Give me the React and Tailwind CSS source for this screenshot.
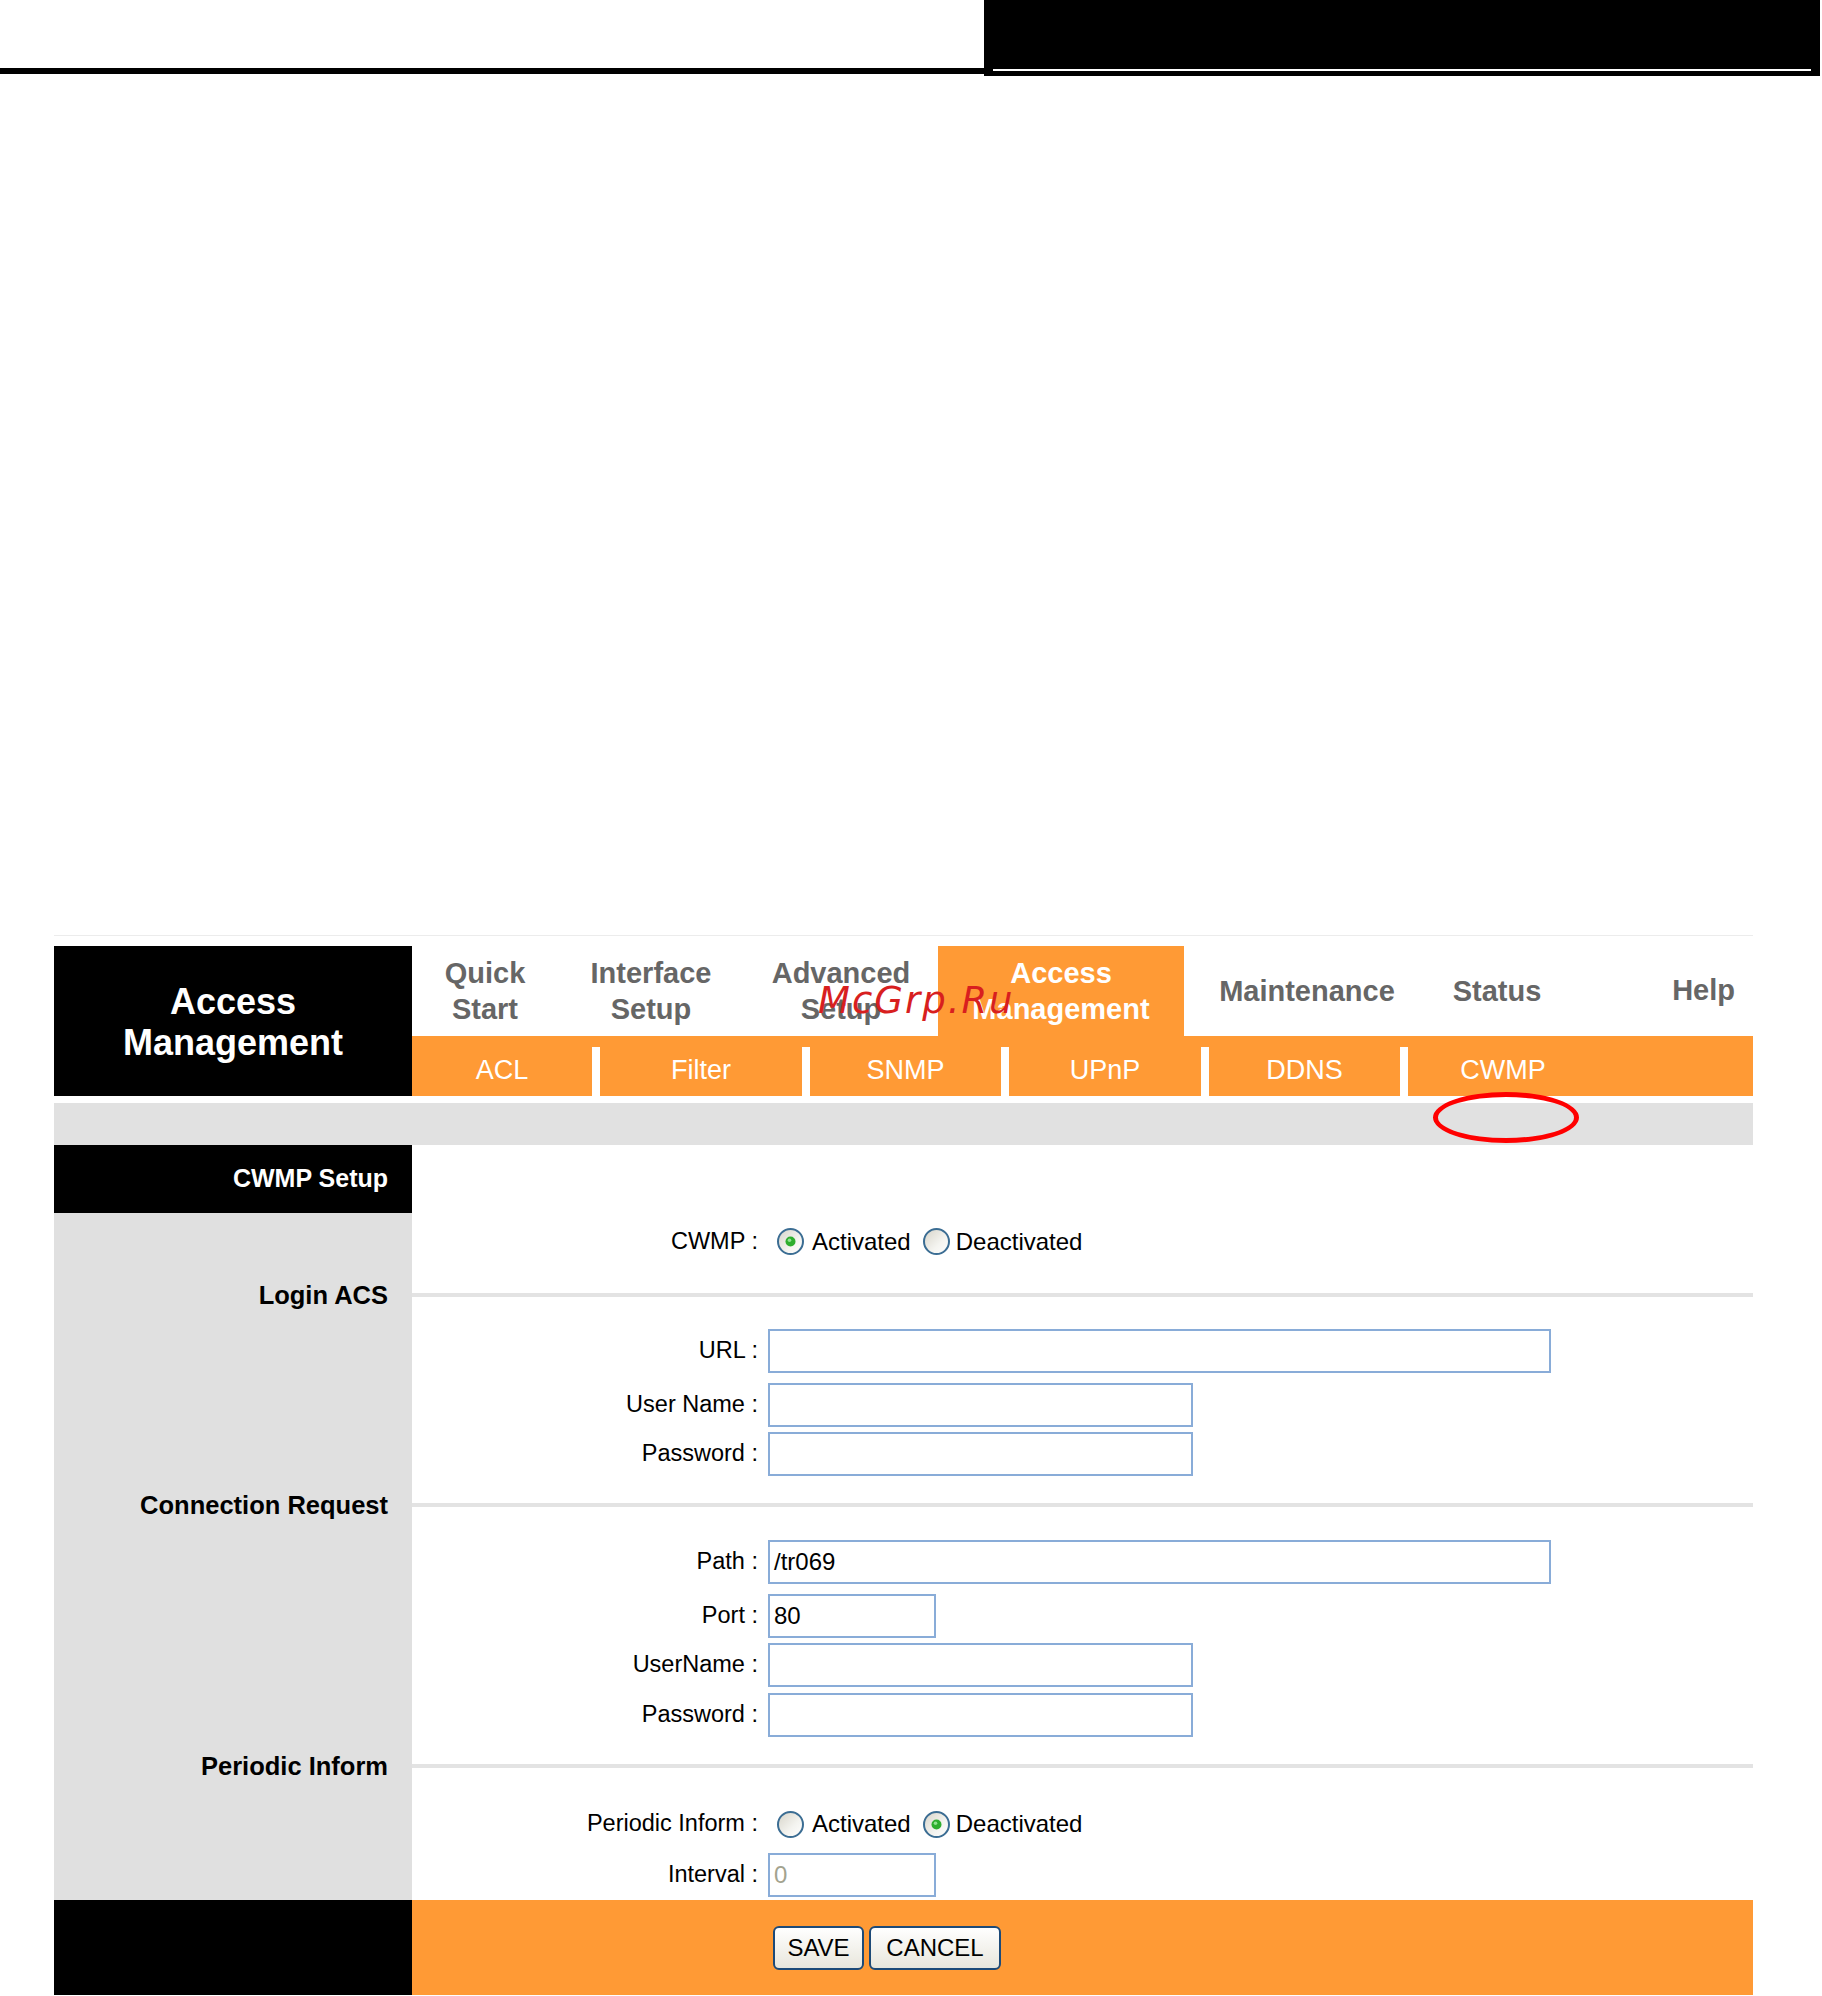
import React from 'react';

const NAV = [
  { lines: ['Quick', 'Start'], w: 'w-[146px]' },
  { lines: ['Interface', 'Setup'], w: 'w-[186px]' },
  { lines: ['Advanced', 'Setup'], w: 'w-[194px]' },
  { lines: ['Access', 'Management'], w: 'w-[246px]', active: true },
  { lines: ['Maintenance'], w: 'w-[246px]' },
  { lines: ['Status'], w: 'w-[134px]' },
];

const SUBTABS = [
  { name: 'ACL', w: 'w-[180px]' },
  { name: 'Filter', w: 'w-[202px]' },
  { name: 'SNMP', w: 'w-[191px]' },
  { name: 'UPnP', w: 'w-[192px]' },
  { name: 'DDNS', w: 'w-[191px]' },
  { name: 'CWMP', w: 'w-[190px]' },
];

const Radio = ({ checked }) => (
  <svg width="29" height="29" viewBox="0 0 29 29" className="shrink-0">
    <defs>
      <linearGradient id="radioFill" x1="0" y1="0" x2="1" y2="1">
        <stop offset="0" stopColor="#d6d3c8" />
        <stop offset="0.6" stopColor="#f4f4f0" />
        <stop offset="1" stopColor="#ffffff" />
      </linearGradient>
    </defs>
    <circle cx="14.5" cy="14.5" r="12.5" fill="url(#radioFill)" stroke="#3b6d93" strokeWidth="2" />
    {checked && <circle cx="14.5" cy="14.5" r="5" fill="#2eae2e" />}
    {checked && <circle cx="13.5" cy="13.3" r="1.8" fill="#8fe38f" />}
  </svg>
);

const Field = ({ w, value, muted }) => (
  <div
    className={`${w} h-[44px] border-2 border-[#89acd8] bg-white flex items-center pl-[4px] text-[24px] ${
      muted ? 'text-[#a3a38f]' : 'text-black'
    }`}
  >
    {value}
  </div>
);

const Row = ({ label, children, className = '' }) => (
  <div className={`flex items-center ${className}`}>
    <div className="w-[346px] text-right text-[23.5px] text-black">{label}</div>
    <div className="ml-[10px] flex items-center">{children}</div>
  </div>
);

const RadioPair = ({ active }) => (
  <div className="flex items-center text-[24px] text-black">
    <div className="ml-[8px]">
      <Radio checked={active} />
    </div>
    <span className="ml-[7px]">Activated</span>
    <div className="ml-[11px]">
      <Radio checked={!active} />
    </div>
    <span className="ml-[5px]">Deactivated</span>
  </div>
);

const Section = ({ label }) => (
  <>
    <div className="h-[54px] bg-[#e0e0e0] flex items-center justify-end pr-[24px] font-bold text-[25.5px] text-black">
      {label}
    </div>
    <div className="h-[54px] flex items-center">
      <div className="h-[4px] w-full bg-[#e3e3e3]" />
    </div>
  </>
);

const Button = ({ children, w }) => (
  <button
    className={`${w} h-[44px] rounded-[6px] border-2 border-[#1d4a78] bg-gradient-to-b from-white to-[#e8e6dc] text-[24px] text-black`}
  >
    {children}
  </button>
);

export default function App() {
  return (
    <div className="relative w-[1822px] h-[1996px] bg-white font-['Liberation_Sans',Arial,sans-serif] overflow-hidden">
      {/* page header strip */}
      <div className="flex h-[76px]">
        <div className="w-[984px] flex flex-col">
          <div className="mt-[68px] h-[6px] bg-black" />
        </div>
        <div className="w-[836px] bg-black flex flex-col justify-end px-[9px] pb-[5px]">
          <div className="h-[2px] bg-white" />
        </div>
      </div>

      <div className="mt-[859px] ml-[54px] w-[1699px]">
        <div className="h-px bg-[#ececec]" />

        {/* router header */}
        <div className="mt-[10px] flex h-[150px]">
          <div className="w-[358px] bg-black flex flex-col items-center justify-center text-white font-bold text-[36px] leading-[41px] pt-[2px]">
            <span>Access</span>
            <span>Management</span>
          </div>
          <div className="w-[1341px] flex flex-col">
            <div className="h-[90px] flex">
              {NAV.map((n) => (
                <div
                  key={n.lines.join(' ')}
                  className={`${n.w} flex flex-col items-center justify-center font-bold text-[29px] leading-[36px] ${
                    n.active ? 'bg-[#ff9a35] text-white' : 'text-[#666666]'
                  }`}
                >
                  {n.lines.map((l) => (
                    <span key={l}>{l}</span>
                  ))}
                </div>
              ))}
              <div className="flex-1 flex items-center justify-end pr-[18px] font-bold text-[29px] text-[#666666]">
                Help
              </div>
            </div>
            <div className="h-[60px] flex bg-[#ff9a35]">
              {SUBTABS.map((t, i) => (
                <React.Fragment key={t.name}>
                  {i > 0 && <div className="w-[8px] h-[49px] mt-[11px] bg-white" />}
                  <div className={`${t.w} flex items-center justify-center pt-[8px] text-[27px] text-white`}>
                    {t.name}
                  </div>
                </React.Fragment>
              ))}
            </div>
          </div>
        </div>

        <div className="relative mt-[7px] h-[42px] bg-[#e1e1e1]">
          <div className="absolute left-[1379px] top-[-11px] w-[146px] h-[51px] rounded-[50%] border-[5px] border-[#ff0000]" />
        </div>

        {/* form */}
        <div className="grid grid-cols-[358px_1341px]">
          <div className="h-[68px] bg-black flex items-center justify-end pr-[24px] font-bold text-[25px] text-white">
            CWMP Setup
          </div>
          <div className="h-[68px]" />

          <div className="bg-[#e0e0e0]" />
          <Row label="CWMP :" className="h-[55px] pt-[2px]">
            <RadioPair active />
          </Row>

          <Section label="Login ACS" />

          <div className="bg-[#e0e0e0]" />
          <div className="pt-[7px] pb-[2px]">
            <Row label="URL :">
              <Field w="w-[783px]" />
            </Row>
            <Row label="User Name :" className="mt-[10px]">
              <Field w="w-[425px]" />
            </Row>
            <Row label="Password :" className="mt-[5px]">
              <Field w="w-[425px]" />
            </Row>
          </div>

          <Section label="Connection Request" />

          <div className="bg-[#e0e0e0]" />
          <div className="pt-[8px] pb-[2px]">
            <Row label="Path :">
              <Field w="w-[783px]" value="/tr069" />
            </Row>
            <Row label="Port :" className="mt-[10px]">
              <Field w="w-[168px]" value="80" />
            </Row>
            <Row label="UserName :" className="mt-[5px]">
              <Field w="w-[425px]" />
            </Row>
            <Row label="Password :" className="mt-[6px]">
              <Field w="w-[425px]" />
            </Row>
          </div>

          <Section label="Periodic Inform" />

          <div className="bg-[#e0e0e0]" />
          <div className="pt-[7px] pb-[3px]">
            <Row label="Periodic Inform :" className="h-[46px] pt-[2px]">
              <RadioPair active={false} />
            </Row>
            <Row label="Interval :" className="mt-[7px]">
              <Field w="w-[168px]" value="0" muted />
            </Row>
          </div>

          <div className="h-[95px] bg-black" />
          <div className="h-[95px] bg-[#ff9a35] flex items-center pl-[361px] gap-[5px]">
            <Button w="w-[91px]">SAVE</Button>
            <Button w="w-[132px]">CANCEL</Button>
          </div>
        </div>
      </div>

      {/* watermark */}
      <div className="absolute left-[818px] top-[973px] font-['DejaVu_Sans',sans-serif] italic text-[37px] tracking-[2px] text-[#d81f1f]">
        McGrp.Ru
      </div>
    </div>
  );
}
